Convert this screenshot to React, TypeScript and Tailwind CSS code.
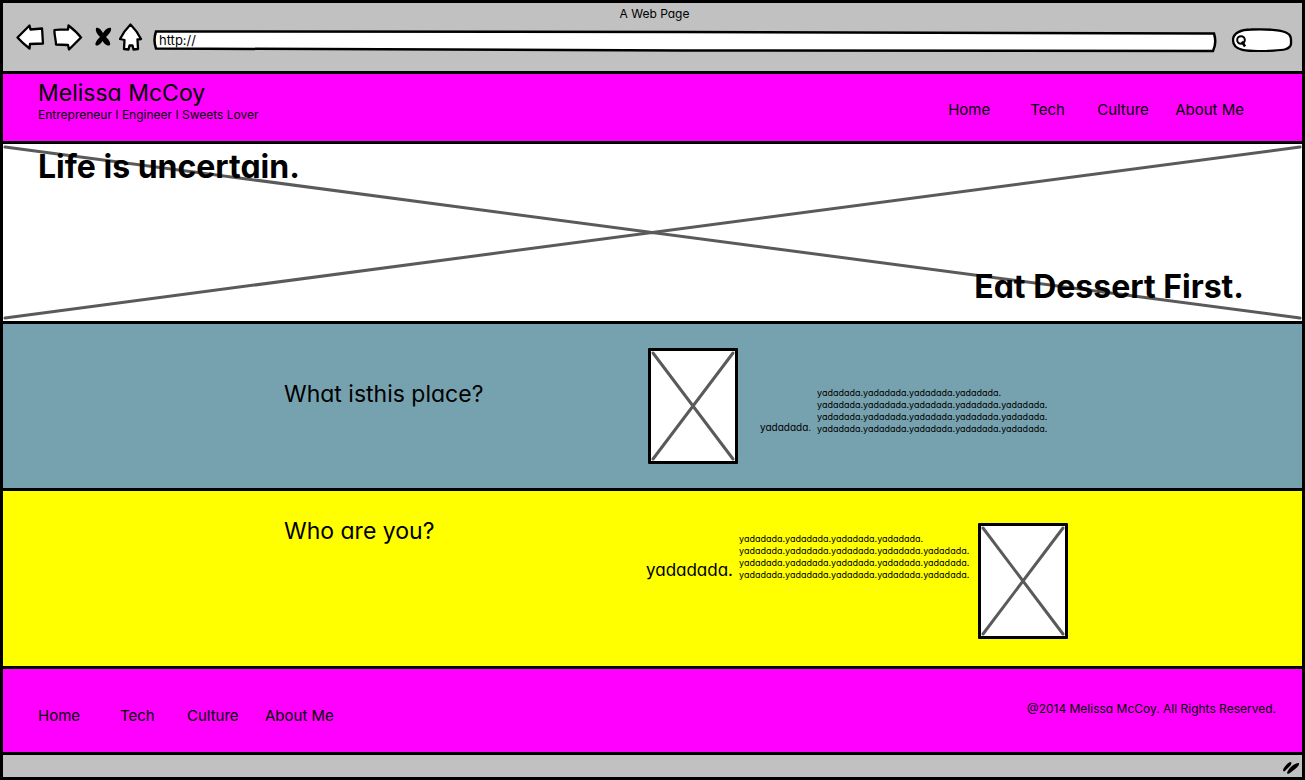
import React from "react";

const links = ["Home", "Tech", "Culture", "About Me"];

function NavLinks({ label }: { label: string }) {
  return (
    <nav aria-label={label}>
      <ul className="grid grid-cols-[82px_67px_78px_auto] text-[15px] leading-5">
        {links.map((name) => (
          <li key={name}>
            <a href="#" className="whitespace-nowrap">{name}</a>
          </li>
        ))}
      </ul>
    </nav>
  );
}

function Cross() {
  return (
    <svg aria-hidden="true" className="absolute inset-0 h-full w-full overflow-visible" viewBox="0 0 100 100" preserveAspectRatio="none">
      <path d="M0 0L100 100M100 0L0 100" fill="none" stroke="#5a5a5a" strokeWidth="3" strokeLinecap="round" vectorEffect="non-scaling-stroke" />
    </svg>
  );
}

function Photo() {
  return (
    <div className="h-[116px] w-[90px] shrink-0 rounded-[1px] border-[3px] border-black bg-white p-[2px]">
      <div className="relative h-full w-full">
        <Cross />
      </div>
    </div>
  );
}

function Copy() {
  return (
    <p className="text-[9px] leading-3">
      yadadada.yadadada.yadadada.yadadada.
      <br />
      yadadada.yadadada.yadadada.yadadada.yadadada.
      <br />
      yadadada.yadadada.yadadada.yadadada.yadadada.
      <br />
      yadadada.yadadada.yadadada.yadadada.yadadada.
    </p>
  );
}

const stroke = { fill: "white", stroke: "black", strokeWidth: 2.3, strokeLinejoin: "round" as const, strokeLinecap: "round" as const };

function Toolbar() {
  return (
    <div className="border-b-[3px] border-black bg-[#c1c1c1] pb-5 pl-[13px] pr-[9px] pt-[3px]">
      <p className="text-center text-xs leading-4">A Web Page</p>
      <div className="mt-px flex h-7 items-center">
        <button aria-label="Back" className="w-[30px]">
          <svg width="30" height="28" viewBox="0 0 30 28" {...stroke}>
            <path d="M1.500 14.500L13.500 2.500L14.500 6.500L26 5.500C26.500 10 26.500 15 27 20.500L14 21L13.500 25.500C9 22 5 18.500 1.500 14.500Z" />
          </svg>
        </button>
        <button aria-label="Forward" className="ml-[7px] w-[30px]">
          <svg width="30" height="28" viewBox="0 0 30 28" {...stroke}>
            <path d="M1.500 7C6 6 10 7 15 6.500L15.500 2.500C20 6 24.500 10 28 14.500L16 26.500L15 22L3 21.500C3 16 1 12 1.500 7Z" />
          </svg>
        </button>
        <button aria-label="Stop" className="ml-[11px] w-[18px]">
          <svg width="18" height="28" viewBox="0 0 18 28">
            <path d="M2 5C5 4 7 7 9 10C11 7 14 4 17 5C18 8 14 12 12 14C14 16 17 19 16 22C13 24 10 20 8.500 18C7 20 4 24 1.500 22C1 19 4 16 6 14C3 11 1 8 2 5Z" fill="black" />
          </svg>
        </button>
        <button aria-label="Home page" className="ml-[7px] w-[24px]">
          <svg width="24" height="28" viewBox="0 0 24 28" {...stroke}>
            <path d="M11.500 1.500C15 5 19 10 22 16L18.500 16.500L19 26L14.500 26.500L13.500 22.500L10.500 22.500L9.500 26.500L5 26L5.500 17L1 16C4 10 8 5 11.500 1.500Z" />
          </svg>
        </button>
        <div className="relative ml-[10px] mt-2 h-[22px] flex-1">
          <svg aria-hidden="true" className="absolute inset-0 h-full w-full overflow-visible" viewBox="0 0 1064 22" preserveAspectRatio="none">
            <path d="M3 1.500L530 2L1061 3.500Q1064 13 1060 21L530 20.500L3 18.500Q0 10 3 1.500Z" fill="white" stroke="black" strokeWidth="2.500" vectorEffect="non-scaling-stroke" />
          </svg>
          <input aria-label="Address" defaultValue="http://" className="relative block h-5 w-full bg-transparent px-[6px] text-[13px] leading-5 outline-none" />
        </div>
        <div className="relative ml-[14px] mt-[5px] h-[24px] w-[62px]">
          <svg aria-hidden="true" className="absolute inset-0 h-full w-full" viewBox="0 0 62 24">
            <path d="M2 12C2 5 10 1.500 20 1.500C34 1 48 1.500 55 4.500C61 7 60 12 60 16C59 23 48 22 36 23C22 23 2 25 2 12Z" {...stroke} />
            <circle cx="10" cy="12" r="3.800" fill="white" stroke="black" strokeWidth="2" />
            <path d="M11 13.500L14 18.500" fill="none" stroke="black" strokeWidth="2.500" />
          </svg>
          <input aria-label="Search" className="relative block h-full w-full bg-transparent pl-5 pr-2 text-xs outline-none" />
        </div>
      </div>
    </div>
  );
}

export default function App() {
  return (
    <div className="flex min-h-screen flex-col border-[3px] border-black bg-[#c1c1c1] font-['Inter',sans-serif] text-black [font-feature-settings:'cv11']">
      <Toolbar />
      <header className="flex justify-between border-b-[3px] border-black bg-[#ff00ff] pb-[19px] pl-[35px] pr-[58px] pt-1">
        <div>
          <h1 className="text-[23px] leading-[30px]">Melissa McCoy</h1>
          <p className="text-xs leading-[14px]">Entrepreneur I Engineer I Sweets Lover</p>
        </div>
        <div className="pt-[22px]">
          <NavLinks label="Main" />
        </div>
      </header>
      <section className="relative flex flex-col justify-between border-b-[3px] border-black bg-white pb-[14px] pl-[35px] pr-[58px] pt-[3px]">
        <div className="absolute inset-x-[2px] inset-y-[3px]">
          <Cross />
        </div>
        <h2 className="relative text-[32px] font-bold leading-10">Life is uncertain.</h2>
        <p className="relative mt-20 text-right text-[32px] font-bold leading-10">Eat Dessert First.</p>
      </section>
      <section className="flex border-b-[3px] border-black bg-[#76a2af] pb-6 pl-[281px] pr-8 pt-6">
        <h2 className="w-[364px] shrink-0 pt-[30px] text-[23px] leading-8">What isthis place?</h2>
        <Photo />
        <div className="flex items-end self-start pl-[22px] pt-[39px]">
          <span className="w-[57px] text-[10px] leading-4">yadadada.</span>
          <Copy />
        </div>
      </section>
      <section className="flex border-b-[3px] border-black bg-[#ffff00] pb-[27px] pl-[281px] pr-8 pt-8">
        <h2 className="w-[362px] shrink-0 text-[23px] leading-4">Who are you?</h2>
        <div className="flex items-end self-start pt-[10px]">
          <span className="w-[93px] text-[17px] leading-[22px]">yadadada.</span>
          <Copy />
        </div>
        <div className="pl-[9px]">
          <Photo />
        </div>
      </section>
      <footer className="flex grow items-start justify-between border-b-[3px] border-black bg-[#ff00ff] pb-[22px] pl-[35px] pr-[26px] pt-8">
        <div className="pt-[5px]">
          <NavLinks label="Footer" />
        </div>
        <p className="text-xs leading-4">@2014 Melissa McCoy. All Rights Reserved.</p>
      </footer>
      <div className="flex h-[22px] justify-end pr-[2px] pt-1">
        <svg width="18" height="16" viewBox="0 0 18 16" fill="black">
          <path d="M1 11C2 8 6 3 9 3C11 5 6 9 3 12C2 13 1 12 1 11ZM5 14C6 10 12 4 17 4C18 7 12 11 8 14C7 15 5 15 5 14Z" />
        </svg>
      </div>
    </div>
  );
}
